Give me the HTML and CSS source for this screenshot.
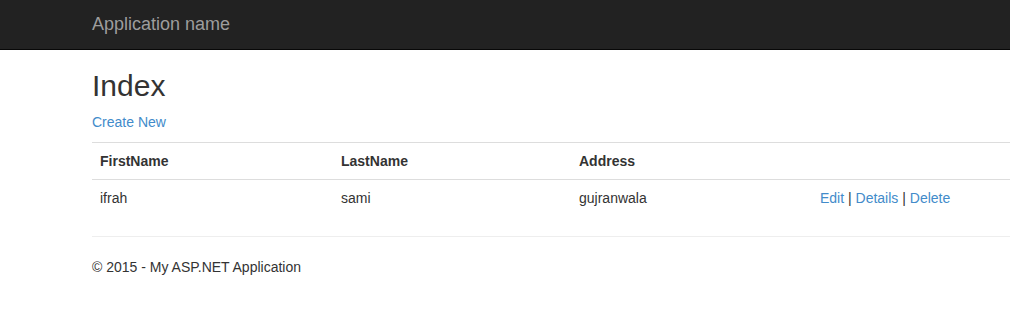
FILE: index.html
```html
<!DOCTYPE html>
<html>
<head>
<meta charset="utf-8">
<title>Index - My ASP.NET Application</title>
<link rel="stylesheet" href="styles.css">
</head>
<body>
<header class="navbar">
  <div class="container">
    <a class="brand" href="#">Application name</a>
  </div>
</header>
<main class="container body-content">
  <h2 class="title">Index</h2>
  <p class="actions"><a href="#">Create New</a></p>
  <table class="table">
    <colgroup>
      <col class="c1"><col class="c2"><col class="c3"><col class="c4">
    </colgroup>
    <tr>
      <th>FirstName</th>
      <th>LastName</th>
      <th>Address</th>
      <th></th>
    </tr>
    <tr>
      <td>ifrah</td>
      <td>sami</td>
      <td>gujranwala</td>
      <td><a href="#">Edit</a> | <a href="#">Details</a> | <a href="#">Delete</a></td>
    </tr>
  </table>
  <hr class="rule">
  <footer class="footer">
    <p>&copy; 2015 - My ASP.NET Application</p>
  </footer>
</main>
</body>
</html>
```

FILE: styles.css
```css
* { box-sizing: border-box; }
html, body { overflow: hidden; }
body {
  margin: 0;
  font-family: "Liberation Sans", Arial, Helvetica, sans-serif;
  font-size: 14px;
  line-height: 20px;
  color: #333;
  background: #fff;
}
a { color: #428bca; text-decoration: none; }

.container {
  margin-left: 92px;
  margin-right: 0;
}

.navbar {
  height: 50px;
  background: #222;
  border-bottom: 1px solid #080808;
}
.navbar .container { display: flex; align-items: center; height: 47px; }
.brand {
  color: #9d9d9d;
  font-size: 18px;
  line-height: 20px;
}

.title {
  margin: 19px 0 10px;
  font-size: 30px;
  font-weight: 500;
  line-height: 33px;
  color: #333;
}
.actions { margin: 0 0 10px; }

.table {
  width: 918px;
  border-collapse: collapse;
  border-spacing: 0;
  table-layout: fixed;
  margin-bottom: 20px;
}
.c1 { width: 241px; }
.c2 { width: 238px; }
.c3 { width: 241px; }
.c4 { width: 198px; }
.table th, .table td {
  padding: 8px;
  line-height: 20px;
  text-align: left;
  vertical-align: top;
  border-top: 1px solid #ddd;
  white-space: nowrap;
}
.table th { font-weight: bold; }

.rule {
  margin: 20px 0;
  border: 0;
  border-top: 1px solid #eee;
  height: 0;
}
.footer p { margin: 0 0 10px; }
```
